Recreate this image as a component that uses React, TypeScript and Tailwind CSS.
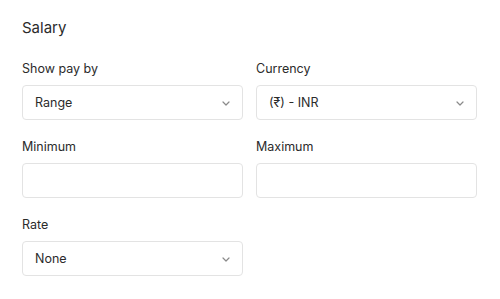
import React from "react";

function Chevron() {
  return (
    <svg width="8" height="5" viewBox="0 0 8 5" fill="none" className="shrink-0">
      <path d="M1 1l3 3 3-3" stroke="#8a8a8a" strokeWidth="1.2" strokeLinecap="round" strokeLinejoin="round" />
    </svg>
  );
}

function Field({ label, value, select }: { label: string; value?: string; select?: boolean }) {
  return (
    <div className="flex flex-col">
      <div className="text-[12.5px] leading-5 text-[#2b2b2b] mb-[6px]">{label}</div>
      <div className="h-[35px] border border-[#e3e3e3] rounded-[4px] bg-white flex items-center justify-between pl-[12px] pr-[12px] pt-[1px]">
        <span className="text-[12.5px] text-[#2b2b2b]">{value ?? ""}</span>
        {select && <Chevron />}
      </div>
    </div>
  );
}

export default function App() {
  return (
    <div className="w-[500px] h-[299px] bg-white pl-[22px] pr-[23px] pt-[18px]" style={{ fontFamily: "Inter, 'Noto Sans', sans-serif" }}>
      <div className="text-[15px] leading-5 text-[#2b2b2b] mb-[21px]">Salary</div>
      <div className="grid grid-cols-2 gap-x-[13px] gap-y-[17px]">
        <Field label="Show pay by" value="Range" select />
        <Field label="Currency" value="(₹) - INR" select />
        <Field label="Minimum" />
        <Field label="Maximum" />
        <Field label="Rate" value="None" select />
      </div>
    </div>
  );
}
